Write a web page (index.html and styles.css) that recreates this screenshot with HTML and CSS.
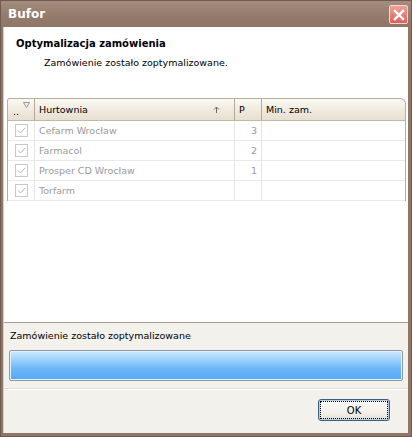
FILE: index.html
```html
<!DOCTYPE html>
<html lang="pl">
<head>
<meta charset="utf-8">
<title>Bufor</title>
<link rel="stylesheet" href="styles.css">
</head>
<body>
<div class="window">
  <div class="titlebar">
    <span class="title">Bufor</span>
    <span class="close"><svg width="12" height="12" viewBox="0 0 12 12"><path d="M2 2 L10 10 M10 2 L2 10" stroke="#fff" stroke-width="2.4" stroke-linecap="square"/></svg></span>
  </div>
  <div class="body">
    <div class="main">
      <div class="heading">
        <div class="h1">Optymalizacja zamówienia</div>
        <div class="h2">Zamówienie zostało zoptymalizowane.</div>
      </div>
      <div class="grid">
        <div class="row head">
          <div class="c c0">..<svg class="filter" width="7" height="6" viewBox="0 0 7 6"><path d="M0.5 0.5 H6.5 L3.5 5.5 Z" fill="none" stroke="#8a97a8" stroke-width="1"/></svg></div>
          <div class="c c1"><span>Hurtownia</span><svg class="sort" width="7" height="7" viewBox="0 0 7 7"><path d="M3.5 1 V7 M1 3.5 L3.5 1 L6 3.5" fill="none" stroke="#6b6b6b" stroke-width="1"/></svg></div>
          <div class="c c2">P</div>
          <div class="c c3">Min. zam.</div>
        </div>
        <div class="row">
          <div class="c c0"><span class="cb"><svg width="9" height="7" viewBox="0 0 9 7"><path d="M1 3.5 L3.5 6 L8 1" fill="none" stroke="#b8b8b8" stroke-width="1"/></svg></span></div>
          <div class="c c1">Cefarm Wrocław</div>
          <div class="c c2 num">3</div>
          <div class="c c3"></div>
        </div>
        <div class="row">
          <div class="c c0"><span class="cb"><svg width="9" height="7" viewBox="0 0 9 7"><path d="M1 3.5 L3.5 6 L8 1" fill="none" stroke="#b8b8b8" stroke-width="1"/></svg></span></div>
          <div class="c c1">Farmacol</div>
          <div class="c c2 num">2</div>
          <div class="c c3"></div>
        </div>
        <div class="row">
          <div class="c c0"><span class="cb"><svg width="9" height="7" viewBox="0 0 9 7"><path d="M1 3.5 L3.5 6 L8 1" fill="none" stroke="#b8b8b8" stroke-width="1"/></svg></span></div>
          <div class="c c1">Prosper CD Wrocław</div>
          <div class="c c2 num">1</div>
          <div class="c c3"></div>
        </div>
        <div class="row">
          <div class="c c0"><span class="cb"><svg width="9" height="7" viewBox="0 0 9 7"><path d="M1 3.5 L3.5 6 L8 1" fill="none" stroke="#b8b8b8" stroke-width="1"/></svg></span></div>
          <div class="c c1">Torfarm</div>
          <div class="c c2 num"></div>
          <div class="c c3"></div>
        </div>
      </div>
    </div>
    <div class="status">
      <div class="status-text">Zamówienie zostało zoptymalizowane</div>
      <div class="progress"></div>
    </div>
    <div class="buttons">
      <button class="ok"><span>OK</span></button>
    </div>
  </div>
</div>
</body>
</html>
```
FILE: styles.css
```css
* { box-sizing: border-box; }
html, body { margin: 0; padding: 0; }
body {
  width: 412px;
  height: 437px;
  font-family: "DejaVu Sans", sans-serif;
  font-size: 9.5px;
  color: #000;
  background: #8c7465;
}
.window {
  width: 412px;
  height: 437px;
  display: flex;
  flex-direction: column;
  background: #8f7667;
  border: 1px solid #6e5a4e;
}
.titlebar {
  height: 26px;
  display: flex;
  align-items: center;
  justify-content: space-between;
  padding: 0 3px 0 7px;
  background: linear-gradient(#a48d7e, #937a6b 60%, #8e7566);
  flex-shrink: 0;
}
.title {
  color: #fff;
  font-weight: bold;
  font-size: 12px;
  font-family: "DejaVu Sans", sans-serif;
}
.close {
  width: 19px;
  height: 19px;
  border: 1px solid #f3d7d3;
  border-radius: 2px;
  background: linear-gradient(#f0a09a, #d9635b);
  display: flex;
  align-items: center;
  justify-content: center;
  margin-top: 1px;
}
.body {
  flex: 1;
  margin: 0 3px 3px 2px;
  display: flex;
  flex-direction: column;
  background: #f3f1ec;
  border-left: 1px solid #d8cfc7;
}
.main {
  background: #fff;
  height: 296px;
  border-bottom: 1px solid #a69a92;
  display: flex;
  flex-direction: column;
}
.heading {
  height: 71px;
  padding: 11px 0 0 12px;
}
.h1 {
  font-weight: bold;
  font-size: 10px;
  height: 17px;
}
.h2 {
  padding-left: 28px;
  margin-top: 2px;
  font-size: 9.5px;
}
.grid {
  margin: 0 2px 0 3px;
  border: 1px solid #b9ad9f;
  border-bottom: none;
  border-radius: 3px 6px 0 0;
  font-size: 9.5px;
}
.row {
  display: flex;
  height: 20px;
  border-bottom: 1px solid #e9e9e9;
  color: #9a9a9a;
}
.row.head {
  height: 22px;
  color: #000;
  background: linear-gradient(#fbf9f4, #efe8dc 60%, #e7dfd0);
  border-bottom: 1px solid #c3b7a7;
  border-radius: 3px 6px 0 0;
}
.c {
  display: flex;
  align-items: center;
  border-right: 1px solid #e4e4e4;
  padding: 0 4px;
  white-space: nowrap;
}
.head .c { border-right: 1px solid #b6a995; }
.c0 { width: 27px; justify-content: center; position: relative; }
.c1 { width: 200px; justify-content: space-between; padding-left: 4px; }
.c2 { width: 27px; }
.c3 { flex: 1; border-right: none; }
.head .c3 { border-right: none; }
.head .c0 { align-items: flex-end; padding-bottom: 3px; justify-content: flex-start; padding-left: 5px; }
.filter { position: absolute; top: 3px; right: 4px; }
.sort { margin-right: 10px; }
.num { justify-content: flex-end; padding-right: 4px; color: #9a9a9a; }
.cb {
  width: 13px;
  height: 13px;
  border: 1px solid #c8c8c8;
  display: flex;
  align-items: center;
  justify-content: center;
  background: #fff;
}
.status {
  padding: 7px 5px 0 5px;
  height: 66px;
  border-bottom: 1px solid #e2ddd5;
}
.status-text {
  height: 15px;
  padding-left: 1px;
}
.progress {
  margin-top: 5px;
  height: 31px;
  border: 1px solid #8d9aa6;
  border-radius: 2px;
  background: linear-gradient(#cfeafd 0%, #a6d6fb 25%, #6eb7f8 60%, #55a8f4 100%);
  box-shadow: inset 0 0 0 1px #e4f2fc;
}
.buttons {
  flex: 1;
  display: flex;
  justify-content: flex-end;
  align-items: flex-start;
  padding: 9px 18px 0 0;
  border-top: 1px solid #fff;
}
.ok {
  width: 72px;
  height: 22px;
  border: 1px solid #3f5e86;
  border-radius: 3px;
  background: linear-gradient(#fdfcfa, #f1eee6 70%, #e1dcd0);
  box-shadow: inset 0 0 0 1px #b9cde7;
  padding: 2px;
  font-family: "DejaVu Sans", sans-serif;
  font-size: 10px;
  color: #000;
}
.ok span {
  display: flex;
  align-items: center;
  justify-content: center;
  height: 100%;
  outline: 1px dotted #000;
}
```
